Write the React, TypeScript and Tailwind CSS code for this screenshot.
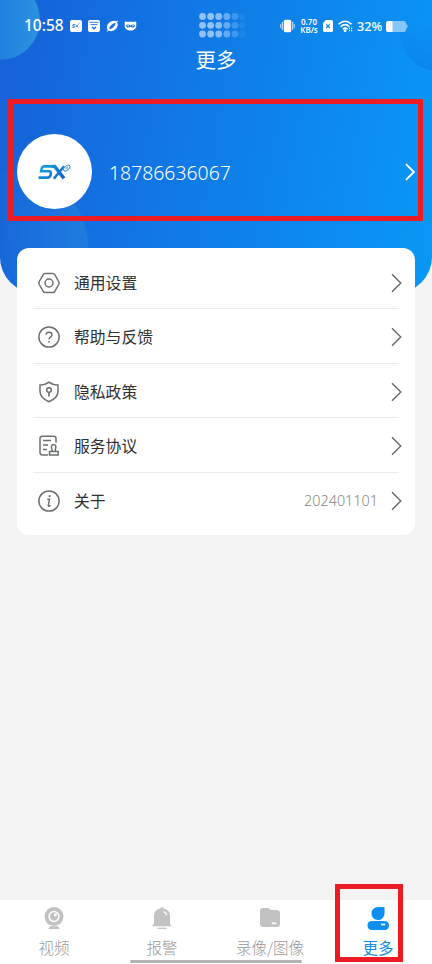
import type { ReactNode } from "react";

const dots = [
  { x: 3.5, o: 0.55 },
  { x: 11.6, o: 0.55 },
  { x: 19.7, o: 0.5 },
  { x: 27.8, o: 0.36 },
  { x: 35.9, o: 0.2 },
  { x: 43, o: 0.06 },
];

const DotGrid = () => (
  <svg width="47" height="25" viewBox="0 0 47 25" fill="#fff">
    {dots.map((d) =>
      [3.5, 12.3, 21].map((y) => (
        <circle key={`${d.x}-${y}`} cx={d.x} cy={y} r="3.4" opacity={d.o} />
      ))
    )}
  </svg>
);

const Chevron = ({ className }: { className: string }) => (
  <svg className={className} viewBox="0 0 11 20" fill="none" stroke="currentColor">
    <path d="M1 1.2 9.8 10 1 18.8" />
  </svg>
);

const StatusBar = () => (
  <div className="flex h-[52px] pl-6 font-['Noto_Sans',sans-serif] text-white">
    <div className="flex w-[174px] items-center">
      <span className="w-[46px] whitespace-nowrap text-[15.5px] font-medium leading-none">10:58</span>
      <svg width="12" height="12" viewBox="0 0 12 12">
        <rect width="12" height="12" rx="2" fill="#fff" />
        <path d="M5 4.6H3L2.7 6h1.8L4.2 7.4H2.3M5.6 4.6 8 7.4M8.2 4.6 5.5 7.4M8.6 4.2l.9-.6" fill="none" stroke="#1b72d8" strokeWidth=".8" />
      </svg>
      <svg className="ml-1.5" width="12" height="12" viewBox="0 0 12 12">
        <rect width="12" height="12" rx="2" fill="#fff" />
        <path d="M1.3 2.3h9.4M2.5 4.6h7" stroke="#1b72d8" strokeWidth=".9" />
        <path d="M4 7l2 1.8L8 7" fill="none" stroke="#1b72d8" strokeWidth="1.3" />
      </svg>
      <svg className="ml-1.5" width="13" height="12" viewBox="0 0 13 12">
        <ellipse cx="6.3" cy="6" rx="6" ry="4.6" transform="rotate(-40 6.3 6)" fill="#fff" />
        <path d="M3.2 9.3C3 6.8 6 3.3 9.6 2.7 9.8 5.2 6.6 8.7 3.2 9.3Z" fill="#1873de" />
        <path d="M.8 11.3 3 9.7M9.6 2.500 11.900.8" stroke="#fff" strokeWidth="1" />
      </svg>
      <svg className="ml-[5px]" width="13" height="12" viewBox="0 0 13 12">
        <path d="M1 1.6c1-.4 1.9 0 2.4.4 2-.5 4.2-.5 6.2 0 .5-.4 1.400-.8 2.400-.4.5.9.5 1.800.2 2.600C13 8 10.500 10.500 6.500 10.500S0 8 .8 4.200C.5 3.400.5 2.500 1 1.600Z" fill="#fff" />
        <path d="M2 5.200c1.500-1.200 3.300-.5 4.500.2 1.200-.7 3-1.400 4.500-.2 0 2-2.700 3.300-4.500 1.600C4.700 8.500 2 7.200 2 5.200Z" fill="#1873de" />
        <path d="M3.400 5.500l1.600.6M9.600 5.500 8 6.100" stroke="#fff" strokeWidth=".9" />
      </svg>
    </div>
    <div className="w-[82px] pt-[13px] pl-px">
      <DotGrid />
    </div>
    <div className="flex items-center">
      <svg width="15" height="14" viewBox="0 0 15 14" fill="none" stroke="#fff">
        <rect x="3.8" y=".7" width="7.4" height="12.6" rx="1.5" fill="#fff" stroke="none" />
        <path d="M2.3 3v8M12.7 3v8" strokeWidth="1.1" opacity=".8" />
        <path d="M.7 5v4M14.3 5v4" strokeWidth="1" opacity=".7" />
      </svg>
      <p className="ml-1 w-[20px] whitespace-nowrap text-center text-[8px] font-semibold leading-[8px]">
        0.70
        <br />
        KB/s
      </p>
      <svg className="ml-[4px]" width="10" height="12" viewBox="0 0 10 12">
        <path d="M3 0h5.5Q10 0 10 1.5v9Q10 12 8.5 12h-7Q0 12 0 10.5V3Z" fill="#fff" />
        <path d="M3.2 4.3 6.8 8M6.8 4.3 3.2 8" stroke="#167fe5" strokeWidth="1.2" />
      </svg>
      <svg className="ml-[5px]" width="15" height="12" viewBox="0 0 15 12" fill="none" stroke="#fff" strokeWidth="1.5">
        <path d="M.5 4.2Q7 -1.8 13.6 4.2M2.6 6.7Q7.1 2.6 11.5 6.7M4.7 9.2q2.4-2.2 4.8 0" />
        <circle cx="7.1" cy="10.7" r=".7" />
        <path d="M11.4 7.5v3.8M13.6 7.5v3.8" strokeWidth="1.1" strokeDasharray="1.6 .6" />
      </svg>
      <span className="ml-[4px] w-[26px] whitespace-nowrap text-[12.7px] font-medium leading-none">32%</span>
      <svg className="ml-[3px]" width="22" height="11" viewBox="0 0 22 11">
        <rect width="20" height="11" rx="2.5" fill="#fff" opacity=".5" />
        <path d="M2.5 0H6.5v11H2.5Q0 11 0 8.5v-6Q0 0 2.5 0Z" fill="#fff" />
        <path d="M20 3q1.6.6 1.6 2.5T20 8Z" fill="#fff" opacity=".5" />
      </svg>
    </div>
  </div>
);

const Avatar = () => (
  <div className="flex h-[75px] w-[75px] items-center justify-center rounded-full bg-white">
    <svg width="35" height="18" viewBox="0 0 35 18" fill="none">
      <defs>
        <linearGradient id="sx" gradientUnits="userSpaceOnUse" x1="4" y1="1" x2="20" y2="18">
          <stop offset="0" stopColor="#12a5e6" />
          <stop offset="1" stopColor="#1769c8" />
        </linearGradient>
      </defs>
      <g stroke="url(#sx)">
        <path d="M16.5 3.4H7Q5.3 3.4 4.8 5.2L4.1 8.3H12q2.4 0 1.8 2.6l-.3 1.2q-.6 2.5-3.2 2.5H1.5" strokeWidth="2.6" />
        <path d="M15.5 3.4h2.2l9.3 12" strokeWidth="3.4" />
        <path d="M27 3.2 16.8 15.7" strokeWidth="2.5" />
      </g>
      <ellipse cx="29.7" cy="5" rx="3.8" ry="2.1" transform="rotate(-40 29.7 5)" fill="#fff" stroke="#3a93cb" strokeWidth="1" />
      <path d="M28.2 6.2l3-2.6M28.7 4.2l1.8 1.8" stroke="#3a93cb" strokeWidth=".8" />
    </svg>
  </div>
);

const SettingsIcon = () => (
  <g>
    <path d="M7.2 1.4h7.6q1.3 0 2 1.2l3.9 6.9q.8 1.5 0 3l-3.9 6.9q-.7 1.2-2 1.2H7.2q-1.3 0-2-1.2l-3.9-6.9q-.8-1.5 0-3l3.9-6.9q.7-1.2 2-1.2Z" />
    <circle cx="11" cy="11" r="4" />
  </g>
);

const HelpIcon = () => (
  <g>
    <circle cx="11" cy="11" r="10.1" />
    <path d="M8 8.8Q8 6.2 11 6.2t3 2.5q0 1.4-1.6 2.4Q11 12 11 13.4" />
    <path d="M11 14.9v1.6" />
  </g>
);

const PrivacyIcon = () => (
  <g>
    <path d="M11 1.1Q14.5 3.9 20 4v6.5q0 6.2-9 10.3-9-4.1-9-10.3V4Q7.5 3.9 11 1.1Z" />
    <circle cx="11" cy="9" r="2.3" />
    <path d="M11 11.3v4.3" strokeWidth="1.7" />
  </g>
);

const ServiceIcon = () => (
  <g>
    <path d="M10 20H4.500Q2 20 2 17.500v-14Q2 1.300 4.200 1.300h11.600Q18 1.300 18 3.500v4.300" />
    <path d="M5 5.6h8M5 10h5M5 14.4h4" />
    <path d="M13.8 16.3q.6-1.8-.2-3-.8-3.500 2-3.700 2.900.2 2.100 3.700-.8 1.200-.2 3M11.500 16.600h8.700v3.500h-8.700Z" />
  </g>
);

const AboutIcon = () => (
  <g>
    <circle cx="11" cy="11" r="10.1" />
    <path d="M9.3 9.3h2.2l-1.2 5.8q-.2 1.2 1 1 .8-.2 1.2-.9" strokeWidth="1.5" />
    <path d="M11.6 5.2v1.9" strokeWidth="1.9" />
  </g>
);

type Item = { label: string; icon: ReactNode; value?: string };

const items: Item[] = [
  { label: "通用设置", icon: <SettingsIcon /> },
  { label: "帮助与反馈", icon: <HelpIcon /> },
  { label: "隐私政策", icon: <PrivacyIcon /> },
  { label: "服务协议", icon: <ServiceIcon /> },
  { label: "关于", icon: <AboutIcon />, value: "202401101" },
];

const MenuRow = ({ label, icon, value }: Item) => (
  <div className="mx-4 h-[54.5px] border-b border-[#ebebeb] last:border-0">
    <div className="flex h-full items-center pt-[3px] pl-[5px]">
      <svg width="22" height="22" viewBox="0 0 22 22" fill="none" stroke="#6c7073" strokeWidth="1.5">
        {icon}
      </svg>
      <span className="ml-[14px] flex-1 text-[15.8px] leading-6 text-[#303030]">{label}</span>
      {value && (
        <span className="mr-[13px] font-['Noto_Sans',sans-serif] text-[14.4px] font-light leading-6 text-[#888]">{value}</span>
      )}
      <Chevron className="-mr-[3px] h-5 w-[11px] stroke-[1.3] text-[#5f6266]" />
    </div>
  </div>
);

const VideoIcon = () => (
  <svg width="24" height="24" viewBox="0 0 24 24">
    <circle cx="12" cy="10.5" r="9.5" fill="#c2c2c2" />
    <circle cx="12" cy="10.5" r="4.9" fill="none" stroke="#fff" strokeWidth="1.5" />
    <circle cx="13.4" cy="8.8" r="1.5" fill="#fff" />
    <path d="M8 20.3h8l1.7 2.7H6.3Z" fill="#c2c2c2" />
  </svg>
);

const AlarmIcon = () => (
  <svg width="24" height="24" viewBox="0 0 24 24">
    <path d="M12 1q1.5 0 1.7 1.5Q20 4 20 9.5v8l1.8 2.7H2.2L4 17.5v-8Q4 4 10.3 2.5 10.5 1 12 1Z" fill="#c2c2c2" />
    <path d="M13.5 5.6q2.7.8 3.2 3.4" fill="none" stroke="#fff" strokeWidth="1.4" />
    <path d="M7.5 22.3h9" stroke="#c2c2c2" strokeWidth="1.3" />
  </svg>
);

const FolderIcon = () => (
  <svg width="24" height="24" viewBox="0 0 24 24">
    <path d="M4.5 2h5q1.2 0 2 .8l1.5 1.3h6Q22 4.300 22 7.300V18q0 3-3 3H5q-3 0-3-3V4.500Q2 2 4.500 2Z" fill="#c2c2c2" />
    <path d="M13.8 17.300h4.400" stroke="#fff" strokeWidth="1.8" />
  </svg>
);

const MoreIcon = () => (
  <svg width="24" height="24" viewBox="0 0 24 24" fill="#0d8ff2">
    <path d="M12.5 1h6v6.5a6.5 6.5 0 1 1-6-6.5Z" />
    <rect x="1.5" y="15" width="21.5" height="9" rx="4.2" />
    <path d="M15 18.5h4.200" stroke="#fff" strokeWidth="1.7" />
  </svg>
);

const tabs = [
  { label: "视频", icon: <VideoIcon /> },
  { label: "报警", icon: <AlarmIcon /> },
  { label: "录像/图像", icon: <FolderIcon /> },
  { label: "更多", icon: <MoreIcon />, active: true },
];

export default function App() {
  return (
    <div className="relative flex h-[964px] w-[432px] flex-col overflow-hidden bg-[#f3f3f3] font-['Noto_Sans_CJK_SC',sans-serif]">
      <header className="relative h-[293px] shrink-0 overflow-hidden rounded-b-[36px] bg-[linear-gradient(100deg,#1760d8_0%,#0e83ea_60%,#0998f5_100%)]">
        <div className="absolute -left-10 -top-5 h-20 w-20 rounded-full bg-[linear-gradient(90deg,#1b7ede_40%,#2d92e0_100%)]" />
        <div className="absolute -right-[43px] -top-[4px] h-[75px] w-[75px] rounded-full bg-[linear-gradient(180deg,#0a7ce600_35%,#0a7ce6a0_100%)]" />
        <div className="absolute -left-[60px] top-[172px] h-[148px] w-[148px] rounded-full bg-[linear-gradient(90deg,#1b6cd840_40%,#2a84dc90_100%)]" />
        <div className="relative">
          <StatusBar />
          <h1 className="h-[47px] text-center text-[20.5px] leading-[15px] text-white">更多</h1>
          <div className="flex h-[145px] items-center pl-[17px] pr-[17px] text-white">
            <Avatar />
            <span className="ml-[17px] flex-1 pt-0.5 font-['Noto_Sans',sans-serif] text-[19.4px] font-light leading-6">
              18786636067
            </span>
            <Chevron className="h-[18px] w-[10px] stroke-2" />
          </div>
        </div>
      </header>

      <main className="relative mx-[17px] -mt-[45.5px] h-[287.5px] shrink-0 rounded-xl bg-white pt-[7px]">
        {items.map((item) => (
          <MenuRow key={item.label} {...item} />
        ))}
      </main>

      <nav className="mt-auto grid h-[64px] shrink-0 grid-cols-4 bg-white pt-[6px]">
        {tabs.map((tab) => (
          <div key={tab.label} className="flex flex-col items-center">
            {tab.icon}
            <span
              className={`mt-[5px] whitespace-nowrap text-[15.5px] leading-6 ${
                tab.active ? "text-[#168be5]" : "font-light text-[#999]"
              }`}
            >
              {tab.label}
            </span>
          </div>
        ))}
      </nav>

      <div className="absolute bottom-px left-[130px] h-[3px] w-[172px] rounded-full bg-[#b3b3b3]" />
      <div className="absolute left-2 top-[99px] h-[122px] w-[415px] border-[5px] border-[#ed1c24]" />
      <div className="absolute left-[335px] top-[884px] h-[78px] w-[68px] border-[5px] border-[#ed1c24]" />
    </div>
  );
}
